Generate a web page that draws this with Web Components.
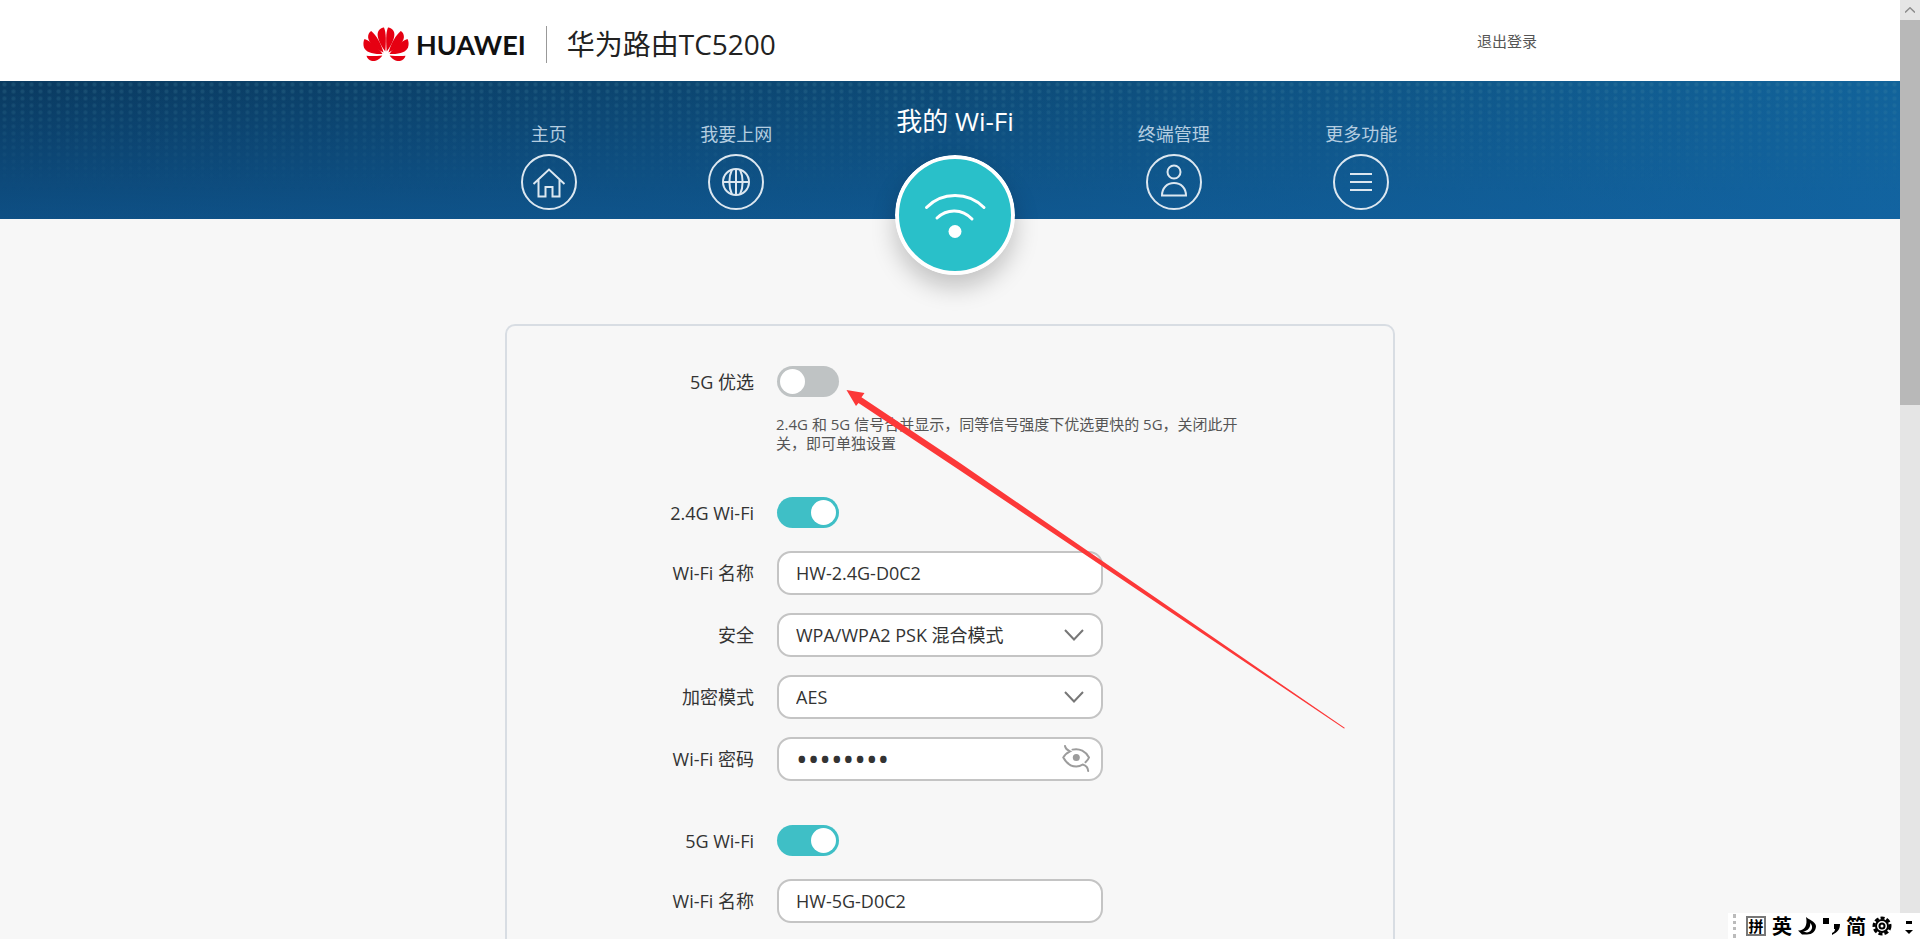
<!DOCTYPE html>
<html lang="zh-CN">
<head>
<meta charset="utf-8">
<title>华为路由TC5200</title>
<style>
  html,
  body {
    height: 100%;
    margin: 0;
  }

  body {
    font-family: "Open Sans", "Noto Sans CJK SC", sans-serif;
    font-size: 18px;
    color: #333333;
    background-color: #f7f7f7;
  }
</style>
</head>
<body>
<router-app></router-app>

<script>
// helpers
function render(host, styles, html) {
  host.attachShadow({ mode: 'open' }).innerHTML = `<style>${styles}</style>${html}`;
}

const ICONS = {
  home: `
    <circle cx="28" cy="28" r="27"/>
    <path d="M12.500 30 28 15.500 43.500 30M17.500 26V42.500H24.500V33H31.500V42.500H38.500V26"/>
  `,
  globe: `
    <circle cx="28" cy="28" r="27"/>
    <circle cx="28" cy="28" r="13"/>
    <path d="M28 15V41M15 28H41M24 15.500C20.500 23 20.500 33 24 40.500M32 15.500C35.500 23 35.500 33 32 40.500"/>
  `,
  user: `
    <circle cx="28" cy="28" r="27"/>
    <circle cx="28" cy="18" r="6.500"/>
    <path d="M16 41.500C16 34 21 29 28 29S40 34 40 41.500Z"/>
  `,
  more: `
    <circle cx="28" cy="28" r="27"/>
    <path d="M17 20H39M17 28H39M17 36H39"/>
  `,
};


// brand
class BrandLogo extends HTMLElement {
  static styles = `
    :host {
      display: flex;
      align-items: center;
      gap: 7px;
      color: #111111;
      font: 700 27px/36px Lato, sans-serif;
    }
  `;

  static rootHTML = `
    <svg width="46" height="35" viewBox="0 0 46 35" fill="#e60012" aria-hidden="true">
      <g id="petals">
        <path d="M22.300 24.500C16 16 13.600 9 15 5C16.500 1.500 19.500.700 21 .500C23.400 6 23 15 22.300 24.500Z"/>
        <path d="M20.500 25.500C11 20.500 6 15.500 5.200 11C4.700 7.500 6.500 4.800 8.200 4C13 8 18 16 20.500 25.500Z"/>
        <path d="M19.500 27C9 27.500 3 25 1 20.500C0 17.500.300 14 1.500 12C8 14.500 16 21 19.500 27Z"/>
        <path d="M19.300 28.500C17 32 13 34.500 9 34C6 33.500 4 31 3.500 28.800C9 29.500 14 28.800 19.300 28.500Z"/>
      </g>
      <use href="#petals" transform="matrix(-1 0 0 1 46 0)"/>
    </svg>
    <span>HUAWEI</span>
  `;

  constructor() {
    super();
    render(this, BrandLogo.styles, BrandLogo.rootHTML);
  }
}
customElements.define('brand-logo', BrandLogo);


class TopBar extends HTMLElement {
  static styles = `
    :host {
      display: block;
      background-color: white;
    }

    header {
      display: flex;
      align-items: center;
      max-width: 1174px;
      min-height: 81px;
      margin: 0 auto;
      padding-top: 8px;
      box-sizing: border-box;
    }

    h1 {
      margin: 0 0 0 20px;
      padding-left: 20px;
      border-left: 1px solid #999999;
      color: #222222;
      font-weight: 400;
      font-size: 28px;
      line-height: 37px;
    }

    a {
      margin-left: auto;
      padding-bottom: 8px;
      color: #555555;
      font-size: 15px;
      text-decoration: none;
    }
  `;

  constructor() {
    super();
    render(this, TopBar.styles, `
      <header>
        <brand-logo></brand-logo>
        <h1><slot></slot></h1>
        <a href="#logout">退出登录</a>
      </header>
    `);
  }
}
customElements.define('top-bar', TopBar);


// navigation
class NavItem extends HTMLElement {
  static styles = `
    :host {
      display: block;
    }

    a {
      display: flex;
      flex-direction: column;
      align-items: center;
      gap: 6px;
      padding-top: 40px;
      color: #b4cde0;
      font-size: 18px;
      line-height: 27px;
      text-decoration: none;
    }

    svg {
      fill: none;
      stroke: #dce7f0;
      stroke-width: 2;
    }

    :host([current]) a {
      gap: 16px;
      padding-top: 22px;
      color: white;
      font-size: 26px;
      line-height: 36px;
    }

    :host([current]) svg {
      border-radius: 50%;
      box-shadow: 0 12px 24px #00000038;
      stroke: white;
      stroke-width: 3;
      stroke-linecap: round;
    }
  `;

  static wifi = `
    <svg width="120" height="120" viewBox="0 0 120 120" aria-hidden="true">
      <circle cx="60" cy="60" r="58" fill="#29c0c9" stroke-width="4"/>
      <path d="M31.500 52.500C47 36.500 73 36.500 89 52.500M42 63C52 53.500 67 53.500 77 64"/>
      <circle cx="60" cy="76.500" r="6.500" fill="white" stroke="none"/>
    </svg>
  `;

  constructor() {
    super();
    const icon = ICONS[this.getAttribute('icon')];
    const svg = icon
      ? `<svg width="56" height="56" viewBox="0 0 56 56" aria-hidden="true">${icon}</svg>`
      : NavItem.wifi;
    render(this, NavItem.styles, `<a href="#"><slot></slot>${svg}</a>`);
  }
}

class MainNav extends HTMLElement {
  static styles = `
    :host {
      display: block;
      position: relative;
      height: 138px;
      background-image:
        linear-gradient(#1264a800, #1264a880),
        linear-gradient(to right, #0a3a60, #0d4a76 50%, #12639a);
    }

    /* dotted texture that fades out downwards */
    :host::before {
      content: "";
      position: absolute;
      inset: 0;
      background-image: radial-gradient(circle, #4f93a838 1px, transparent 3px);
      background-size: 9px 7px;
      mask-image: linear-gradient(black, transparent 80%);
    }

    nav {
      position: relative;
      display: grid;
      grid-template-columns: 3fr 3fr 4fr 3fr 3fr;
      max-width: 1000px;
      margin: 0 auto;
      padding-left: 10px;
    }
  `;

  constructor() {
    super();
    render(this, MainNav.styles, `<nav><slot></slot></nav>`);
  }
}


// form rows
class FormRow extends HTMLElement {
  static styles = `
    :host {
      display: grid;
      grid-template-columns: 247px minmax(0, 326px);
      column-gap: 23px;
      align-items: center;
    }

    label {
      text-align: right;
      line-height: 24px;
    }

    .box {
      display: grid;
      align-items: center;
    }

    .box > * {
      grid-area: 1 / 1;
    }

    .box svg {
      justify-self: end;
      margin-right: 19px;
      fill: none;
      pointer-events: none;
    }

    .box input,
    .box select {
      appearance: none;
      width: 100%;
      height: 44px;
      margin: 0;
      padding: 0 17px;
      box-sizing: border-box;
      border: 2px solid #c4c4c4;
      border-radius: 14px;
      background-color: white;
      color: #333333;
      font: inherit;
    }

    .box input[type="password"] {
      font-size: 31px;
    }

    .box button {
      justify-self: end;
      margin-right: 13px;
      padding: 0;
      border: 0;
      background: none;
      line-height: 0;
    }

    .box button svg {
      margin: 0;
    }

    .switch {
      appearance: none;
      display: flex;
      width: 62px;
      height: 31px;
      margin: 0;
      padding: 3px;
      box-sizing: border-box;
      border-radius: 16px;
      background-color: #bfc3c4;
    }

    .switch::before {
      content: "";
      width: 25px;
      border-radius: 50%;
      background-color: white;
    }

    .switch:checked {
      justify-content: flex-end;
      background-color: #3fbfc6;
    }
  `;

  constructor() {
    super();
    render(this, FormRow.styles, `
      <label for="control">${this.getAttribute('label')}</label>
      ${this.control()}
    `);
  }
}

class SwitchRow extends FormRow {
  control() {
    const checked = this.hasAttribute('checked') ? 'checked' : '';
    return `<input class="switch" id="control" type="checkbox" ${checked}>`;
  }
}

class TextRow extends FormRow {
  control() {
    return `<div class="box"><input id="control" type="text" value="${this.getAttribute('value')}"></div>`;
  }
}

class SelectRow extends FormRow {
  control() {
    return `
      <div class="box">
        <select id="control"><option>${this.getAttribute('value')}</option></select>
        <svg width="20" height="12" viewBox="0 0 20 12" stroke="#777777" stroke-width="2" aria-hidden="true">
          <path d="M1 1 10 10.500 19 1"/>
        </svg>
      </div>
    `;
  }
}

class PasswordRow extends FormRow {
  control() {
    return `
      <div class="box">
        <input id="control" type="password" value="${this.getAttribute('value')}">
        <button type="button" aria-label="显示密码">
          <svg width="28" height="28" viewBox="0 0 28 28" stroke="#9c9c9c" stroke-width="2" stroke-linecap="round">
            <path d="M3 1C3.500 4 5 5 8 6.300C4.500 8 2.500 10 1.300 12.500C4.500 18.500 9 21.500 14.300 21.500C16.500 21.500 18.500 21 20.700 19.500C24 20.500 26 22.500 26.200 26"/>
            <path d="M10.500 4.600C17.500 2.800 24 6.500 27 12.500C26.300 14.500 25 16 23.500 17.300"/>
            <circle cx="14.300" cy="12.500" r="3.500" fill="#9c9c9c" stroke="none"/>
          </svg>
        </button>
      </div>
    `;
  }
}

class FormHint extends HTMLElement {
  constructor() {
    super();
    render(this, `
      :host {
        display: block;
        padding-left: 269px;
      }

      p {
        max-width: 470px;
        margin: 0;
        color: #555555;
        font-size: 15px;
        line-height: 19px;
      }
    `, `<p><slot></slot></p>`);
  }
}

class FormGroup extends HTMLElement {
  constructor() {
    super();
    render(this, `
      :host {
        display: flex;
        flex-direction: column;
        gap: 18px;
      }

      :host(:not([compact])) ::slotted(switch-row) {
        margin-bottom: 5px;
      }
    `, `<slot></slot>`);
  }
}

class SettingsCard extends HTMLElement {
  constructor() {
    super();
    render(this, `
      :host {
        display: flex;
        flex-direction: column;
        gap: 44px;
        max-width: 890px;
        min-height: 1000px;
        margin: 105px auto 0;
        padding-top: 40px;
        box-sizing: border-box;
        border: 2px solid #d8dde3;
        border-radius: 10px;
      }
    `, `<slot></slot>`);
  }
}


// page furniture
class PageScrollbar extends HTMLElement {
  constructor() {
    super();
    render(this, `
      :host {
        display: flex;
        flex-direction: column;
        background-color: #e5e5e5;
      }

      button {
        height: 20px;
        padding: 0;
        border: 0;
        background: none;
        line-height: 0;
      }

      .thumb {
        height: 41%;
        background-color: #b8b8b8;
      }
    `, `
      <button type="button" aria-label="向上滚动">
        <svg width="10" height="6" viewBox="0 0 10 6" fill="none" stroke="#8c8c8c" stroke-width="1.500"><path d="M0 5.500 5 .800 10 5.500"/></svg>
      </button>
      <div class="thumb"></div>
    `);
  }
}

class ImeBar extends HTMLElement {
  constructor() {
    super();
    render(this, `
      :host {
        position: absolute;
        right: 0;
        bottom: 0;
        display: flex;
        align-items: center;
        gap: 6px;
        height: 26px;
        padding: 0 2px 0 5px;
        background-color: white;
        color: black;
        font: 700 20px/20px "Noto Sans CJK SC", sans-serif;
      }

      .grip {
        height: 24px;
        padding-right: 4px;
        border-left: 3px dotted #bbbbbb;
      }

      .mode {
        width: 16px;
        border: 2px solid #777777;
        font-size: 15px;
        line-height: 16px;
        text-align: center;
      }
    `, `
      <span class="grip"></span>
      <span class="mode">拼</span>
      <span>英</span>
      <svg width="18" height="18" viewBox="0 0 18 18" aria-hidden="true">
        <path d="M8 0C11 3 17 4 18 9C18 14 14 17.500 9 17.500H4L0 13.500C6 14 10 9 8 0Z"/>
        <path d="M5 14.500C10 14 13 10 12 6C16 9 14 15 9 15.500Z" fill="white"/>
      </svg>
      <svg width="18" height="18" viewBox="0 0 18 18" aria-hidden="true">
        <path d="M1 1H7V7H1ZM12 7H18C18 12 16 15 10 18V16C12 15 13 14 13 12H12Z"/>
      </svg>
      <span>简</span>
      <svg width="20" height="20" viewBox="0 0 20 20" fill="none" stroke="black" aria-hidden="true">
        <circle cx="10" cy="10" r="8" stroke-width="3" stroke-dasharray="4 2"/>
        <circle cx="10" cy="10" r="6" stroke-width="2"/>
        <circle cx="10" cy="10" r="2.500" stroke-width="2"/>
      </svg>
      <svg width="20" height="18" viewBox="0 0 20 18" aria-hidden="true">
        <path d="M8 4H14V7H8ZM7 13H15L11 17Z"/>
      </svg>
    `);
  }
}

class PointerArrow extends HTMLElement {
  constructor() {
    super();
    render(this, `
      :host {
        position: absolute;
        left: 846px;
        top: 390px;
        line-height: 0;
        pointer-events: none;
      }
    `, `
      <svg width="500" height="340" viewBox="0 0 500 340" fill="#fc3838" aria-hidden="true">
        <path d="M.500 0 18.500 3 15.500 7.200 114 73 499 338 498 338.600 114 80.500 12.500 13 10 16Z"/>
      </svg>
    `);
  }
}

class RouterApp extends HTMLElement {
  static styles = `
    :host {
      position: relative;
      display: grid;
      grid-template-columns: minmax(0, 1fr) 20px;
      height: 100vh;
      overflow: hidden;
    }

    .page {
      overflow: hidden;
    }
  `;

  static rootHTML = `
    <div class="page">
      <top-bar>华为路由TC5200</top-bar>
      <main-nav>
        <nav-item icon="home">主页</nav-item>
        <nav-item icon="globe">我要上网</nav-item>
        <nav-item current>我的 Wi-Fi</nav-item>
        <nav-item icon="user">终端管理</nav-item>
        <nav-item icon="more">更多功能</nav-item>
      </main-nav>
      <main>
        <settings-card>
          <form-group compact>
            <switch-row label="5G 优选"></switch-row>
            <form-hint>2.4G 和 5G 信号合并显示，同等信号强度下优选更快的 5G，关闭此开关，即可单独设置</form-hint>
          </form-group>
          <form-group>
            <switch-row label="2.4G Wi-Fi" checked></switch-row>
            <text-row label="Wi-Fi 名称" value="HW-2.4G-D0C2"></text-row>
            <select-row label="安全" value="WPA/WPA2 PSK 混合模式"></select-row>
            <select-row label="加密模式" value="AES"></select-row>
            <password-row label="Wi-Fi 密码" value="password"></password-row>
          </form-group>
          <form-group>
            <switch-row label="5G Wi-Fi" checked></switch-row>
            <text-row label="Wi-Fi 名称" value="HW-5G-D0C2"></text-row>
          </form-group>
        </settings-card>
      </main>
    </div>
    <page-scrollbar></page-scrollbar>
    <pointer-arrow></pointer-arrow>
    <ime-bar></ime-bar>
  `;

  constructor() {
    super();
    render(this, RouterApp.styles, RouterApp.rootHTML);
  }
}

customElements.define('nav-item', NavItem);
customElements.define('main-nav', MainNav);
customElements.define('switch-row', SwitchRow);
customElements.define('text-row', TextRow);
customElements.define('select-row', SelectRow);
customElements.define('password-row', PasswordRow);
customElements.define('form-hint', FormHint);
customElements.define('form-group', FormGroup);
customElements.define('settings-card', SettingsCard);
customElements.define('page-scrollbar', PageScrollbar);
customElements.define('ime-bar', ImeBar);
customElements.define('pointer-arrow', PointerArrow);
customElements.define('router-app', RouterApp);
</script>
</body>
</html>
